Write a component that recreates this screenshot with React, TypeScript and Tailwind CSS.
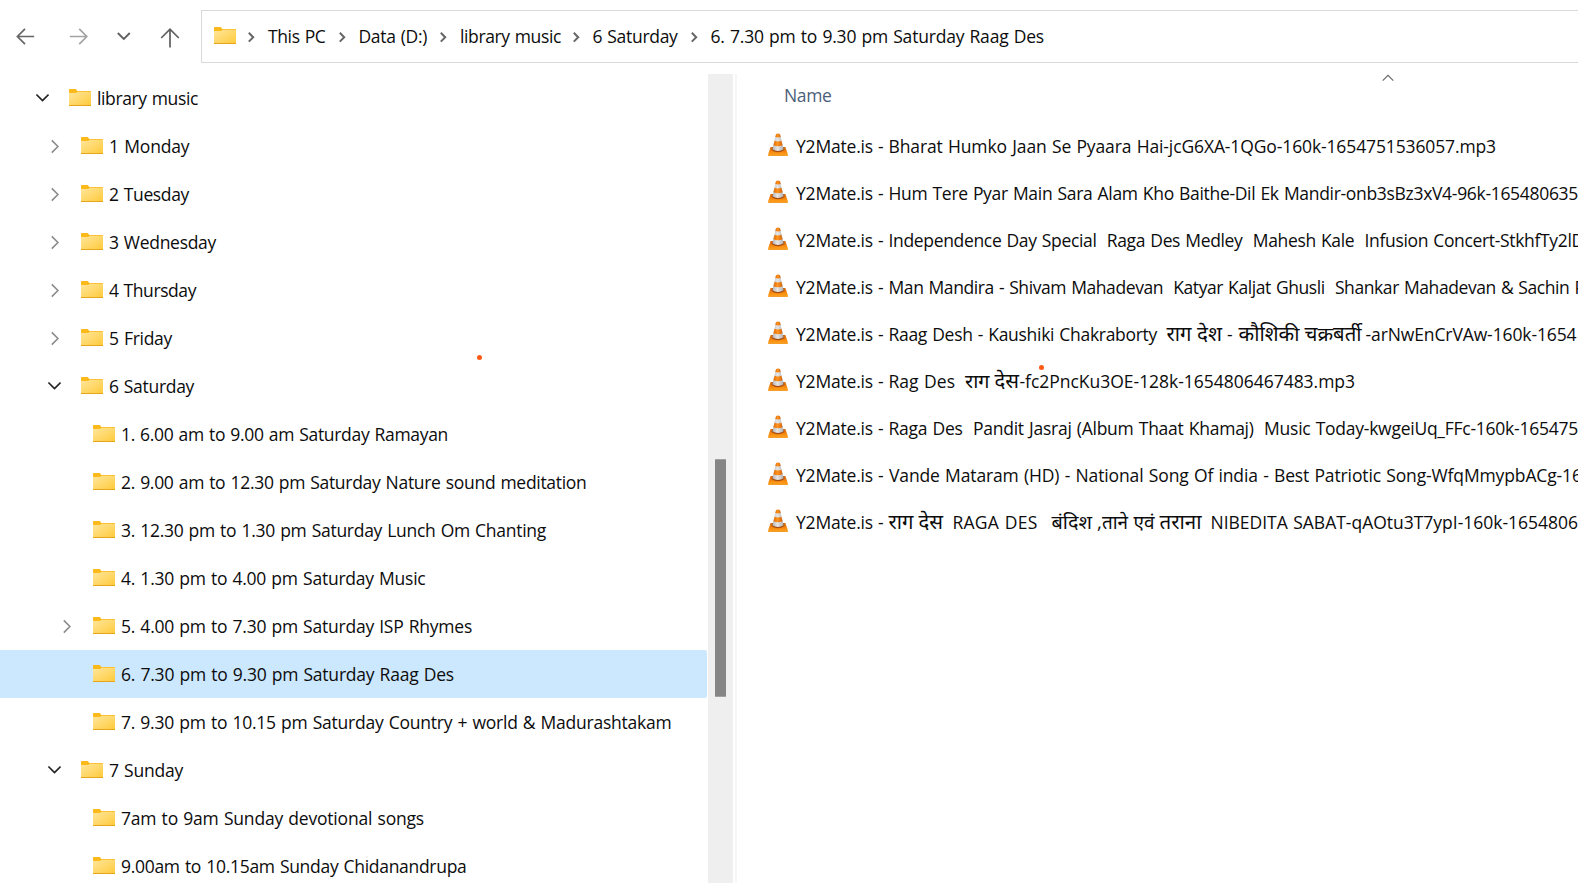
import { useLayoutEffect, useRef } from "react";

/*
 * Text that takes up the given width. Latin runs are adjusted by tracking;
 * Devanagari runs by size, since tracking would break their head line.
 */
function Fit({ text, width }: { text: string; width: number }) {
  const ref = useRef<HTMLSpanElement>(null);
  useLayoutEffect(() => {
    const el = ref.current;
    if (!el) return;
    const measure = () => el.getBoundingClientRect().width;
    if (/[\u0900-\u097f]/.test(text)) {
      el.style.lineHeight = "18px";
      el.style.fontSize = "20px";
      el.style.fontSize = `${(20 * width) / measure()}px`;
      return;
    }
    el.style.letterSpacing = "0px";
    const natural = measure();
    el.style.letterSpacing = "0.5px";
    const step = (measure() - natural) / 0.5;
    el.style.letterSpacing = step > 0 ? `${(width - natural) / step}px` : "0px";
  }, [text, width]);
  return (
    <span ref={ref} className="inline-block whitespace-pre [word-spacing:0.9px]">
      {text}
    </span>
  );
}

function Folder() {
  return (
    <svg width="22" height="18" viewBox="0 0 22 18" className="block shrink-0">
      <defs>
        <linearGradient id="folder" x1="0" y1="0" x2="1" y2="1">
          <stop offset="0" stopColor="#ffe69c" />
          <stop offset="1" stopColor="#ffcb3d" />
        </linearGradient>
      </defs>
      <path d="M0 0.7Q0 0 0.7 0H6.8L8.3 2H21.3Q22 2 22 2.7V6H0Z" fill="#fbb91c" />
      <path d="M0 4H7.2L8.6 2.8H22V16.2H0Z" fill="url(#folder)" />
      <path d="M0 16H22V16.4Q22 17 21.4 17H0.6Q0 17 0 16.4Z" fill="#eaa41c" />
    </svg>
  );
}

function Cone() {
  return (
    <svg width="20" height="23" viewBox="0 0 20 23" className="block shrink-0">
      <defs>
        <linearGradient id="coneWhite" x1="0" x2="1">
          <stop offset="0" stopColor="#b4b4b4" />
          <stop offset="0.45" stopColor="#e6e6e6" />
          <stop offset="1" stopColor="#b0b0b0" />
        </linearGradient>
        <linearGradient id="coneOrange" x1="0" x2="1">
          <stop offset="0" stopColor="#dd6c08" />
          <stop offset="0.45" stopColor="#ff9420" />
          <stop offset="1" stopColor="#d4640c" />
        </linearGradient>
        <linearGradient id="coneBase" x1="0" y1="0" x2="0" y2="1">
          <stop offset="0" stopColor="#d9680f" />
          <stop offset="0.6" stopColor="#f78a0e" />
          <stop offset="1" stopColor="#ffac28" />
        </linearGradient>
      </defs>
      <path d="M2.6 14H17.4L19.8 21V22.6H0.2V21Z" fill="url(#coneBase)" />
      <path d="M0.2 21.8H19.8V22.7H0.2Z" fill="#f08600" />
      <path d="M3.4 17Q10 21.4 16.6 17L15.6 14H4.4Z" fill="#a94e12" />
      <path d="M8 1.2Q10 -0.4 12 1.2L15.6 16.2Q10 19.8 4.4 16.2Z" fill="url(#coneWhite)" />
      <path d="M8 1.2Q10 -0.4 12 1.2L12.7 4Q10 4.9 7.3 4Z" fill="url(#coneOrange)" />
      <path d="M6.6 7.8Q10 9.2 13.4 7.8L14.6 12.2Q10 14.5 5.4 12.2Z" fill="url(#coneOrange)" />
    </svg>
  );
}

type Mark = "open" | "closed" | null;

function Chevron({ kind }: { kind: Mark }) {
  if (kind === "open")
    return (
      <svg width="14" height="14" viewBox="0 0 14 14" fill="none" className="block">
        <path d="M1.4 3.5L7.5 9.6L13.6 3.5" stroke="#222222" strokeWidth="1.7" />
      </svg>
    );
  if (kind === "closed")
    return (
      <svg width="14" height="15" viewBox="0 0 14 15" fill="none" className="block">
        <path d="M4.8 1.4L10.9 7.5L4.8 13.6" stroke="#8c8c8c" strokeWidth="1.6" />
      </svg>
    );
  return null;
}

type Node = { level: number; mark: Mark; label: string; width: number; selected?: boolean };

const tree: Node[] = [
  { level: 0, mark: "open", label: "library music", width: 101 },
  { level: 1, mark: "closed", label: "1 Monday", width: 80.5 },
  { level: 1, mark: "closed", label: "2 Tuesday", width: 80 },
  { level: 1, mark: "closed", label: "3 Wednesday", width: 107 },
  { level: 1, mark: "closed", label: "4 Thursday", width: 87 },
  { level: 1, mark: "closed", label: "5 Friday", width: 63 },
  { level: 1, mark: "open", label: "6 Saturday", width: 85 },
  { level: 2, mark: null, label: "1. 6.00 am to 9.00 am Saturday Ramayan", width: 327 },
  { level: 2, mark: null, label: "2. 9.00 am to 12.30 pm Saturday Nature sound meditation", width: 465.5 },
  { level: 2, mark: null, label: "3. 12.30 pm to 1.30 pm Saturday Lunch Om Chanting", width: 425 },
  { level: 2, mark: null, label: "4. 1.30 pm to 4.00 pm Saturday Music", width: 304.5 },
  { level: 2, mark: "closed", label: "5. 4.00 pm to 7.30 pm Saturday ISP Rhymes", width: 351 },
  { level: 2, mark: null, label: "6. 7.30 pm to 9.30 pm Saturday Raag Des", width: 333, selected: true },
  { level: 2, mark: null, label: "7. 9.30 pm to 10.15 pm Saturday Country + world & Madurashtakam", width: 550.5 },
  { level: 1, mark: "open", label: "7 Sunday", width: 74 },
  { level: 2, mark: null, label: "7am to 9am Sunday devotional songs", width: 303 },
  { level: 2, mark: null, label: "9.00am to 10.15am Sunday Chidanandrupa", width: 345.5 },
];

const indent = ["pl-[35px]", "pl-[47px]", "pl-[59px]"];

/* Runs of a file name: [text, start, width]; starts are measured from the name's left edge. */
type Run = [string, number, number];

const prefix: Run[] = [
  ["Y2Mate.is", 0, 77],
  ["-", 82, 7.5],
];

const files: Run[][] = [
  [["Bharat Humko Jaan Se Pyaara Hai-jcG6XA-1QGo-160k-1654751536057.mp3", 92.5, 607.5]],
  [["Hum Tere Pyar Main Sara Alam Kho Baithe-Dil Ek Mandir-onb3sBz3xV4-96k-165480635", 92.5, 689.5]],
  [
    ["Independence Day Special  Raga Des Medley  Mahesh Kale  Infusion Concert-StkhfTy2l", 92.5, 683],
    ["D", 775.5, 13],
  ],
  [
    ["Man Mandira - Shivam Mahadevan  Katyar Kaljat Ghusli  Shankar Mahadevan & Sachin ", 92.5, 686],
    ["P", 778.5, 11],
  ],
  [
    ["Raag Desh - Kaushiki Chakraborty", 92.5, 268.5],
    ["राग", 370.5, 25],
    ["देश", 401, 25],
    ["-", 431, 7],
    ["कौशिकी", 442.5, 61],
    ["चक्रबर्ती", 508.5, 57],
    ["-arNwEnCrVAw-160k-1654", 569.5, 211],
    ["8", 781.5, 10],
  ],
  [
    ["Rag Des", 92.5, 66.5],
    ["राग", 169, 24.5],
    ["देस", 198.5, 24.5],
    ["-fc2PncKu3OE-128k-1654806467483.mp3", 223.5, 335.5],
  ],
  [["Raga Des  Pandit Jasraj (Album Thaat Khamaj)  Music Today-kwgeiUq_FFc-160k-165475", 92.5, 689.5]],
  [
    ["Vande Mataram (HD) - National Song Of india - Best Patriotic Song-WfqMmypbACg-1", 93, 683],
    ["6", 776, 10],
  ],
  [
    ["राग", 92.5, 25],
    ["देस", 122.5, 24.5],
    ["RAGA DES", 156.5, 85],
    ["बंदिश", 255.5, 40.5],
    [",ताने", 301, 31],
    ["एवं", 337.5, 21],
    ["तराना", 363.5, 42],
    ["NIBEDITA SABAT-qAOtu3T7ypI-160k-1654806", 414.5, 367.5],
  ],
];

function FileName({ runs }: { runs: Run[] }) {
  return (
    <span className="flex shrink-0 items-baseline">
      {runs.map(([text, start, width], i) => (
        <span
          key={i}
          className="block shrink-0 whitespace-pre"
          style={{ width: i + 1 < runs.length ? runs[i + 1][1] - start : width }}
        >
          <Fit text={text} width={width} />
        </span>
      ))}
    </span>
  );
}

const crumbs = [
  { label: "This PC", cell: "w-[90.5px]", width: 57.5 },
  { label: "Data (D:)", cell: "w-[101.5px]", width: 68.5 },
  { label: "library music", cell: "w-[132.5px]", width: 101 },
  { label: "6 Saturday", cell: "w-[118px]", width: 85 },
  { label: "6. 7.30 pm to 9.30 pm Saturday Raag Des", cell: "w-[350px]", width: 333.5 },
];

export default function App() {
  return (
    <div className="relative flex h-[883px] w-[1578px] flex-col overflow-hidden bg-white font-['Open_Sans','Noto_Sans',sans-serif] text-[17.5px] leading-6 text-[#0c0c0c]">
      <header className="flex h-[74px] shrink-0 items-start">
        <nav className="flex h-[74px] w-[201px] shrink-0 items-start pt-[27px] pl-[16px]">
          <svg width="20" height="20" viewBox="0 0 20 20" fill="none" stroke="#666666" strokeWidth="1.7">
            <path d="M18.2 9.5H1.4M9 1.8L1.4 9.5L9 17.2" />
          </svg>
          <svg width="20" height="20" viewBox="0 0 20 20" fill="none" stroke="#a3a3a3" strokeWidth="1.7" className="ml-[33px]">
            <path d="M0.8 9.5H17.8M10.2 1.8L17.8 9.5L10.2 17.2" />
          </svg>
          <svg width="14" height="20" viewBox="0 0 14 20" fill="none" stroke="#5f5f5f" strokeWidth="1.8" className="ml-[27.5px]">
            <path d="M0.8 6L6.8 12L12.8 6" />
          </svg>
          <svg width="20" height="21" viewBox="0 0 20 21" fill="none" stroke="#5f5f5f" strokeWidth="1.7" className="ml-[29.5px]">
            <path d="M10 20.5V2.2M1.2 11L10 2.2L18.8 11" />
          </svg>
        </nav>
        <div className="mt-[10px] flex h-[53px] flex-1 items-start border border-r-0 border-[#d9d9d9] pl-[12px]">
          <div className="pt-[16px]">
            <Folder />
          </div>
          <div className="flex items-start pt-[13px] pl-[9px]">
            {crumbs.map((c) => (
              <div key={c.label} className={`flex shrink-0 items-start ${c.cell}`}>
                <svg width="12" height="12" viewBox="0 0 12 12" fill="none" className="mt-[7px] shrink-0">
                  <path d="M3.8 1.8L8.2 6.2L3.8 10.6" stroke="#666666" strokeWidth="2" />
                </svg>
                <span className="ml-[11px]">
                  <Fit text={c.label} width={c.width} />
                </span>
              </div>
            ))}
          </div>
        </div>
      </header>

      <div className="flex h-[809px] shrink-0 overflow-hidden">
        <aside className="w-[708px] shrink-0">
          {tree.map((n) => (
            <div
              key={n.label}
              className={`flex h-[48px] w-[707px] items-start rounded-r-[2px] ${indent[n.level]} ${n.selected ? "bg-[#cce8ff]" : ""}`}
            >
              <div className="w-[34px] shrink-0 pt-[17px]">
                <Chevron kind={n.mark} />
              </div>
              <div className="pt-[15px]">
                <Folder />
              </div>
              <span className="pt-[12px] pl-[6px]">
                <Fit text={n.label} width={n.width} />
              </span>
            </div>
          ))}
        </aside>

        <div className="flex w-[25px] shrink-0 justify-center bg-[#efefef] pt-[385px]">
          <div className="h-[238px] w-[11px] border-y border-[#a0a0a0] bg-[#858585]" />
        </div>
        <div className="ml-[2px] w-[2px] shrink-0 bg-[#f6f6f6]" />

        <main className="flex min-w-0 flex-1 flex-col overflow-hidden pl-[31px]">
          <div className="flex h-[49px] shrink-0 items-start">
            <span className="w-[614px] pt-[9px] pl-[16px] text-[#4c607a]">
              <Fit text="Name" width={47.5} />
            </span>
            <svg width="12" height="8" viewBox="0 0 12 8" fill="none">
              <path d="M0.7 6.7L6 1.4L11.3 6.7" stroke="#666666" strokeWidth="1.1" />
            </svg>
          </div>
          {files.map((runs, i) => (
            <div key={i} className="flex h-[47px] shrink-0 items-start">
              <div className="pt-[10px]">
                <Cone />
              </div>
              <div className="flex h-[47px] items-baseline pt-[11px] pl-[8px]">
                <FileName runs={[...prefix, ...runs]} />
              </div>
            </div>
          ))}
        </main>
      </div>

      <div className="absolute top-[355px] left-[477px] size-[5px] rounded-full bg-[#ff5a14]" />
      <div className="absolute top-[365px] left-[1038.5px] size-[5px] rounded-full bg-[#ff5a14]" />
    </div>
  );
}
